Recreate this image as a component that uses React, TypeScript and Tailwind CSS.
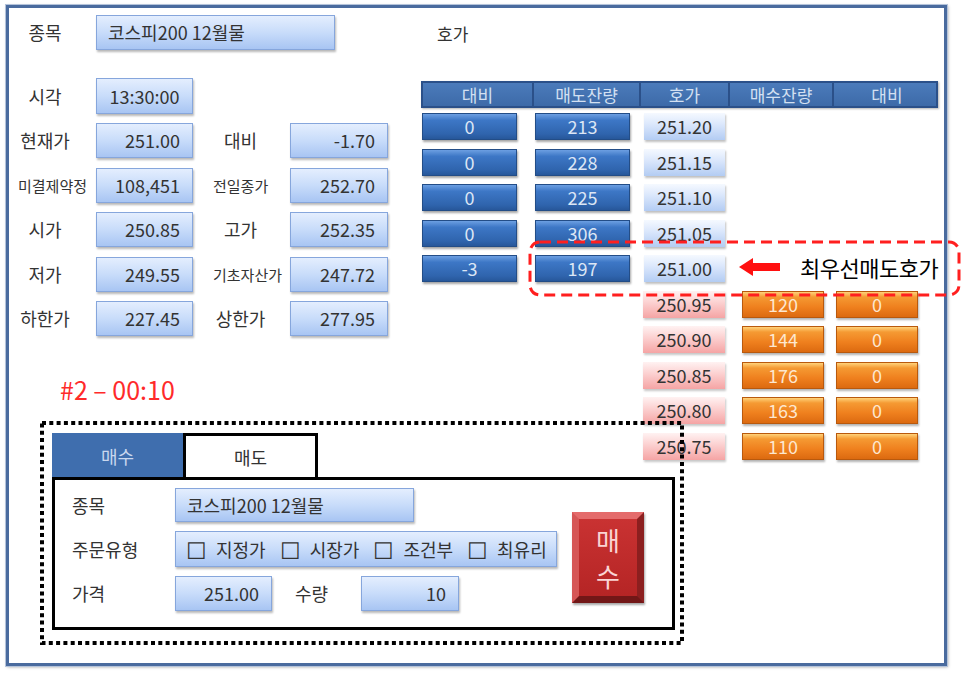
import React from 'react';

const inputBox =
  'flex items-center border border-[#86a6dc] bg-[linear-gradient(180deg,#e4eefe,#c8dcfa_50%,#a8c5f3)] shadow-[1px_2px_2px_rgba(0,0,0,0.28)] text-[18px] text-[#333] whitespace-nowrap';

function Box({ className, children }: { className: string; children: React.ReactNode }) {
  return <div className={`${inputBox} ${className}`}>{children}</div>;
}

const blueBtn =
  'h-[27px] w-[95px] border border-[#234d87] bg-[linear-gradient(180deg,#6c9fe2,#3d77c6_25%,#2f64ad_80%,#27579a)] text-center text-[18px] leading-[25px] text-[#dce6f5] shadow-[1px_2px_2px_rgba(0,0,0,0.35)]';
const orangeBtn =
  'h-[27px] w-[82px] border border-[#b9590d] bg-[linear-gradient(180deg,#ffd27a,#f59a33_20%,#ef801e_60%,#dc6a10)] text-center text-[18px] leading-[25px] text-[#fde7cf] shadow-[1px_2px_2px_rgba(0,0,0,0.3)]';
const bluePrice =
  'h-[27px] w-[81px] bg-[linear-gradient(180deg,#f5f9ff,#dce8fc_40%,#b3ccf3)] text-center text-[18px] leading-[27px] text-[#333] shadow-[1px_2px_2px_rgba(0,0,0,0.25)]';
const pinkPrice =
  'h-[27px] w-[82px] bg-[linear-gradient(180deg,#fff2f2,#fcd3d3_40%,#f5a4a4)] text-center text-[18px] leading-[27px] text-[#333] shadow-[1px_2px_2px_rgba(0,0,0,0.22)]';

const quoteRows = [
  ['현재가', '251.00', '대비', '-1.70'],
  ['미결제약정', '108,451', '전일종가', '252.70'],
  ['시가', '250.85', '고가', '252.35'],
  ['저가', '249.55', '기초자산가', '247.72'],
  ['하한가', '227.45', '상한가', '277.95'],
];

const asks = [
  ['0', '213', '251.20'],
  ['0', '228', '251.15'],
  ['0', '225', '251.10'],
  ['0', '306', '251.05'],
  ['-3', '197', '251.00'],
];

const bids = [
  ['250.95', '120', '0'],
  ['250.90', '144', '0'],
  ['250.85', '176', '0'],
  ['250.80', '163', '0'],
  ['250.75', '110', '0'],
];

const orderTypes = ['지정가', '시장가', '조건부', '최유리'];

const cols = 'grid grid-cols-[109px_107px_89px_104px_108px]';

function Label({ text, className }: { text: string; className: string }) {
  const small = text.length >= 4;
  return (
    <div className={`${className} whitespace-nowrap text-center leading-[35px] ${small ? 'text-[15px]' : 'text-[18px]'}`}>
      {text}
    </div>
  );
}

export default function App() {
  return (
    <div className="relative h-[676px] w-[972px] overflow-hidden bg-white pl-[6px] pt-[5px] font-['Noto_Sans_CJK_KR',sans-serif] text-[#333]">
      <div className="h-[661px] w-[941px] border-[3px] border-[#4a6b9e] shadow-[0_0_0_1px_#b4c3da,1px_1px_3px_rgba(0,0,0,0.35)]">
        <div className="flex items-start">
          {/* left: quote info + order panel */}
          <div className="w-[412px] shrink-0">
            <div className="ml-[9px] mt-[7px] flex h-[35px] items-center">
              <div className="w-[54px] text-center text-[18px]">종목</div>
              <Box className="ml-[24px] h-[35px] w-[239px] pl-[11px]">코스피200 12월물</Box>
            </div>
            <div className="ml-[9px] mt-[28px] flex h-[36px] items-center">
              <div className="w-[54px] text-center text-[18px]">시각</div>
              <Box className="ml-[24px] h-[36px] w-[97px] justify-center">13:30:00</Box>
            </div>
            <div className="ml-[9px] mt-[9px] flex flex-col gap-[9.5px]">
              {quoteRows.map(([l1, v1, l2, v2]) => (
                <div key={l1} className="flex h-[35px] items-center">
                  <Label text={l1} className="w-[54px]" />
                  <Box className="ml-[24px] h-[35px] w-[97px] justify-end pr-[12px]">{v1}</Box>
                  <Label text={l2} className="ml-[20px] w-[55px]" />
                  <Box className="ml-[22px] h-[35px] w-[98px] justify-end pr-[12px]">{v2}</Box>
                </div>
              ))}
            </div>

            <div className="ml-[51px] mt-[39px] text-[25px] leading-[29px] text-[#ff2a2a]">#2 – 00:10</div>

            {/* order panel, dotted annotation around it */}
            <div className="relative ml-[31px] mt-[17px] h-[224px] w-[644px] pl-[12px] pt-[12px]">
              <svg className="absolute left-0 top-0 z-10" width="644" height="224">
                <rect x="2" y="2" width="640" height="220" fill="none" stroke="#000" strokeWidth="4" strokeDasharray="4 3.3" />
              </svg>
              <div className="flex h-[44px]">
                <div className="w-[131px] bg-[#3f6eae] text-center text-[18px] leading-[46px] text-[#c9d7ee]">매수</div>
                <div className="w-[135px] border-x-[3px] border-t-[3px] border-black bg-white text-center text-[18px] leading-[43px] text-[#333]">
                  매도
                </div>
              </div>
              <div className="flex h-[153px] w-[623px] border-[3px] border-black pl-[17px] pt-[8px]">
                <div className="flex flex-col">
                  <div className="flex h-[34px] items-center">
                    <div className="w-[103px] text-[18px]">종목</div>
                    <Box className="h-[34px] w-[239px] pl-[11px]">코스피200 12월물</Box>
                  </div>
                  <div className="mt-[9px] flex h-[36px] items-center">
                    <div className="w-[103px] text-[18px]">주문유형</div>
                    <Box className="h-[36px] w-[382px] gap-[14px] pl-[10px]">
                      {orderTypes.map((t) => (
                        <span key={t} className="flex items-center gap-[9px]">
                          <span className="text-[23px] leading-none">☐</span>
                          <span>{t}</span>
                        </span>
                      ))}
                    </Box>
                  </div>
                  <div className="mt-[9px] flex h-[35px] items-center">
                    <div className="w-[103px] text-[18px]">가격</div>
                    <Box className="h-[35px] w-[97px] justify-end pr-[12px]">251.00</Box>
                    <div className="ml-[23px] w-[66px] text-[18px]">수량</div>
                    <Box className="h-[35px] w-[98px] justify-end pr-[12px]">10</Box>
                  </div>
                </div>
                <button className="ml-[15px] mt-[24px] flex h-[91px] w-[72px] flex-col items-center justify-center border-[7px] border-b-[#721717] border-l-[#d65656] border-r-[#8c1f1f] border-t-[#e46b6b] bg-[linear-gradient(180deg,#c93232,#b52525)] text-[26px] leading-[36px] text-[#fad4d4] shadow-[1px_2px_2px_rgba(0,0,0,0.35)]">
                  <span>매</span>
                  <span>수</span>
                </button>
              </div>
            </div>
          </div>

          {/* right: order book */}
          <div className="w-[517px] shrink-0">
            <div className="ml-[16px] mt-[14px] text-[17px] leading-[24px]">호가</div>
            <div className={`${cols} mt-[35px] h-[27px] border-2 border-[#2b5089] bg-[linear-gradient(180deg,#4b7bbb,#3d6aa8)] text-[17px] leading-[23px] text-[#d3e0f2] shadow-[1px_1px_2px_rgba(0,0,0,0.3)]`}>
              {['대비', '매도잔량', '호가', '매수잔량', '대비'].map((h, i) => (
                <div key={i} className={`text-center ${i > 0 ? 'border-l-2 border-[#2b5089]' : ''}`}>
                  {h}
                </div>
              ))}
            </div>
            <div className="mt-[5px] flex flex-col gap-[8.5px]">
              {asks.map(([diff, qty, price]) => (
                <div key={price} className={cols}>
                  <div className={`ml-[1px] ${blueBtn}`}>{diff}</div>
                  <div className={`ml-[5px] ${blueBtn}`}>{qty}</div>
                  <div className={`ml-[7px] ${bluePrice}`}>{price}</div>
                  <div />
                  <div />
                </div>
              ))}
              {bids.map(([price, qty, diff]) => (
                <div key={price} className={cols}>
                  <div />
                  <div />
                  <div className={`ml-[6px] ${pinkPrice}`}>{price}</div>
                  <div className={`ml-[16px] ${orangeBtn}`}>{qty}</div>
                  <div className={`ml-[6px] ${orangeBtn}`}>{diff}</div>
                </div>
              ))}
            </div>
          </div>
        </div>
      </div>

      {/* best ask annotation */}
      <svg className="absolute left-[526px] top-[238px]" width="440" height="62">
        <rect x="4" y="4" width="429" height="53" rx="10" fill="none" stroke="#ff1f1f" strokeWidth="3" strokeDasharray="11 6" />
        <rect x="225" y="25" width="29" height="8" fill="#ff1010" />
        <polygon points="213,29 227,20 227,38" fill="#ff1010" />
      </svg>
      <div className="absolute left-[800px] top-[253px] text-[22px] leading-[28px] tracking-[-0.5px] text-black">최우선매도호가</div>
    </div>
  );
}
